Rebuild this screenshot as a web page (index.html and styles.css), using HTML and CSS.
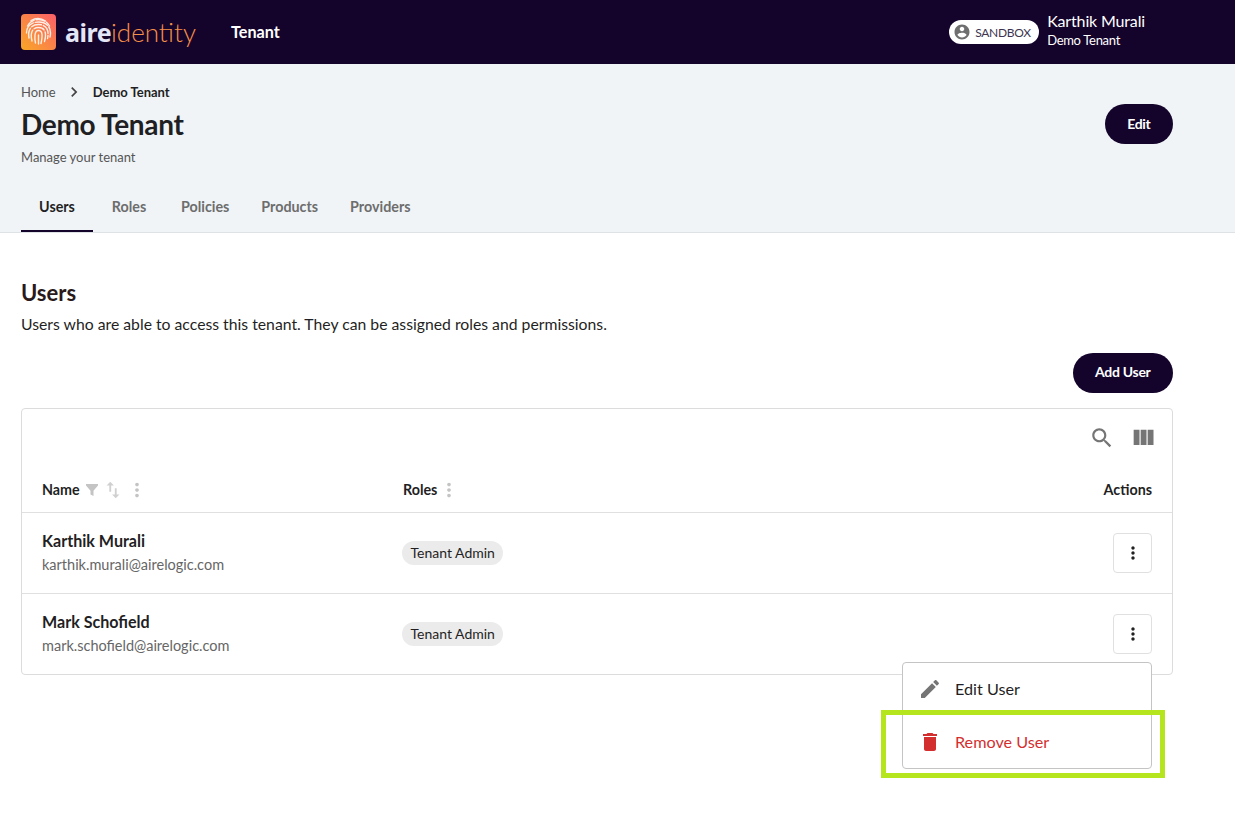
FILE: index.html
```html
<!DOCTYPE html>
<html lang="en">
<head>
    <meta charset="UTF-8">
    <title>Demo Tenant</title>
    <link rel="stylesheet" href="styles.css">
</head>
<body>
<header class="topbar">
    <div class="logo">
        <svg class="logo-mark" width="36" height="36" viewBox="0 0 36 36">
            <defs>
                <linearGradient id="mark" x1="0" y1="1" x2="1" y2="0">
                    <stop offset="0" stop-color="#f9a825"/>
                    <stop offset="1" stop-color="#fb5f6a"/>
                </linearGradient>
            </defs>
            <rect width="35" height="36" rx="4" fill="url(#mark)"/>
            <g fill="none" stroke="#fdeee6" stroke-width="1.4" stroke-linecap="round">
                <path d="M10 6.500c4.500-2.500 10-2.500 14.500 .5"/>
                <path d="M6.500 12c3-5 7-6.500 11-6.500s8 1.500 11 6.500" stroke-dasharray="9 2"/>
                <path d="M5.500 19c0-7 5-11 12-11s12 4 12 11c0 2-.2 3-.5 4" stroke-dasharray="13 2"/>
                <path d="M8 24c-1.500-8 2-13.500 9.500-13.500s11 5.500 9 14" stroke-dasharray="10 2"/>
                <path d="M11 27c-1.500-6-1-13.500 6.500-13.500s8 7 6 14" stroke-dasharray="11 2"/>
                <path d="M14.500 29c-1-4-1.500-12.500 3-12.500s4 6 2.500 13"/>
                <path d="M17.500 21v9"/>
            </g>
        </svg>
        <span class="logo-text"><b>aire</b><span class="logo-light">identity</span></span>
    </div>
    <span class="topbar-title">Tenant</span>
    <div class="topbar-right">
        <span class="env-pill">
            <svg width="18" height="18" viewBox="0 0 24 24"><path fill="#6f6f6f" d="M12 2C6.480 2 2 6.480 2 12s4.480 10 10 10 10-4.480 10-10S17.520 2 12 2zm0 3c1.660 0 3 1.340 3 3s-1.340 3-3 3-3-1.340-3-3 1.340-3 3-3zm0 14.200c-2.500 0-4.710-1.280-6-3.220.03-1.990 4-3.080 6-3.080 1.990 0 5.970 1.090 6 3.080-1.290 1.940-3.500 3.220-6 3.220z"/></svg>
            SANDBOX
        </span>
        <div class="user">
            <div class="user-name">Karthik Murali</div>
            <div class="user-tenant">Demo Tenant</div>
        </div>
    </div>
</header>

<section class="subhead">
    <div class="subhead-main">
        <div>
            <nav class="crumbs">
                <span>Home</span>
                <svg width="20" height="20" viewBox="0 0 24 24"><path fill="#444" d="M10 6 8.590 7.410 13.170 12l-4.580 4.590L10 18l6-6z"/></svg>
                <b>Demo Tenant</b>
            </nav>
            <h1>Demo Tenant</h1>
            <p class="subhead-note">Manage your tenant</p>
        </div>
        <button type="button" class="btn btn-edit">Edit</button>
    </div>
    <nav class="tabs">
        <a class="tab active">Users</a>
        <a class="tab">Roles</a>
        <a class="tab">Policies</a>
        <a class="tab">Products</a>
        <a class="tab">Providers</a>
    </nav>
</section>

<main class="content">
    <h2>Users</h2>
    <p class="lead">Users who are able to access this tenant. They can be assigned roles and permissions.</p>
    <div class="add-row">
        <button type="button" class="btn btn-add">Add User</button>
    </div>

    <div class="table-card">
        <div class="table-tools">
            <svg width="26" height="26" viewBox="0 0 24 24"><path fill="#757575" d="M15.500 14h-.79l-.28-.27C15.410 12.590 16 11.110 16 9.500 16 5.910 13.090 3 9.500 3S3 5.910 3 9.500 5.910 16 9.500 16c1.610 0 3.090-.59 4.230-1.570l.27.28v.79l5 4.990L20.490 19l-4.990-5zm-6 0C7.010 14 5 11.990 5 9.500S7.010 5 9.500 5 14 7.010 14 9.500 11.990 14 9.500 14z"/></svg>
            <svg width="28" height="28" viewBox="0 0 24 24"><path fill="#757575" d="M10 18h5V5h-5v13zm-6 0h5V5H4v13zM16 5v13h5V5h-5z"/></svg>
        </div>
        <div class="row row-head">
            <div class="col-name">
                <b>Name</b>
                <svg class="filter-icon" width="18" height="18" viewBox="0 0 24 24"><path fill="#c4c4c4" d="M4 4h16v2l-6 7v7l-4-2v-5L4 6z"/></svg>
                <svg class="sort-icon" width="22" height="22" viewBox="0 0 24 24"><path fill="#d0d0d0" d="M9 3 5 7h3v7h2V7h3L9 3zm7 14v-7h-2v7h-3l4 4 4-4h-3z"/></svg>
                <svg class="col-menu" width="22" height="22" viewBox="0 0 24 24"><path fill="#c4c4c4" d="M12 8c1.100 0 2-.9 2-2s-.9-2-2-2-2 .9-2 2 .9 2 2 2zm0 2c-1.100 0-2 .9-2 2s.9 2 2 2 2-.9 2-2-.9-2-2-2zm0 6c-1.100 0-2 .9-2 2s.9 2 2 2 2-.9 2-2-.9-2-2-2z"/></svg>
            </div>
            <div class="col-roles">
                <b>Roles</b>
                <svg class="roles-menu" width="22" height="22" viewBox="0 0 24 24"><path fill="#c4c4c4" d="M12 8c1.100 0 2-.9 2-2s-.9-2-2-2-2 .9-2 2 .9 2 2 2zm0 2c-1.100 0-2 .9-2 2s.9 2 2 2 2-.9 2-2-.9-2-2-2zm0 6c-1.100 0-2 .9-2 2s.9 2 2 2 2-.9 2-2-.9-2-2-2z"/></svg>
            </div>
            <div class="col-actions"><b>Actions</b></div>
        </div>
        <div class="row row-user">
            <div class="col-name">
                <div>
                    <div class="person">Karthik Murali</div>
                    <div class="email">karthik.murali@airelogic.com</div>
                </div>
            </div>
            <div class="col-roles"><span class="chip">Tenant Admin</span></div>
            <div class="col-actions">
                <button type="button" class="more">
                    <svg width="20" height="20" viewBox="0 0 24 24"><path fill="#222" d="M12 8c1.100 0 2-.9 2-2s-.9-2-2-2-2 .9-2 2 .9 2 2 2zm0 2c-1.100 0-2 .9-2 2s.9 2 2 2 2-.9 2-2-.9-2-2-2zm0 6c-1.100 0-2 .9-2 2s.9 2 2 2 2-.9 2-2-.9-2-2-2z"/></svg>
                </button>
            </div>
        </div>
        <div class="row row-user">
            <div class="col-name">
                <div>
                    <div class="person">Mark Schofield</div>
                    <div class="email">mark.schofield@airelogic.com</div>
                </div>
            </div>
            <div class="col-roles"><span class="chip">Tenant Admin</span></div>
            <div class="col-actions">
                <button type="button" class="more">
                    <svg width="20" height="20" viewBox="0 0 24 24"><path fill="#222" d="M12 8c1.100 0 2-.9 2-2s-.9-2-2-2-2 .9-2 2 .9 2 2 2zm0 2c-1.100 0-2 .9-2 2s.9 2 2 2 2-.9 2-2-.9-2-2-2zm0 6c-1.100 0-2 .9-2 2s.9 2 2 2 2-.9 2-2-.9-2-2-2z"/></svg>
                </button>
            </div>
        </div>
    </div>
</main>

<div class="menu">
    <div class="menu-item">
        <svg width="24" height="24" viewBox="0 0 24 24"><path fill="#757575" d="M3 17.250V21h3.750L17.810 9.940l-3.750-3.750L3 17.250zM20.710 7.040c.39-.39.39-1.020 0-1.410l-2.340-2.340c-.39-.39-1.020-.39-1.410 0l-1.830 1.830 3.750 3.750 1.830-1.830z"/></svg>
        Edit User
    </div>
    <div class="menu-item danger">
        <svg width="24" height="24" viewBox="0 0 24 24"><path fill="#d32f2f" d="M6 19c0 1.100.9 2 2 2h8c1.100 0 2-.9 2-2V7H6v12zM19 4h-3.500l-1-1h-5l-1 1H5v2h14V4z"/></svg>
        Remove User
    </div>
</div>
<div class="callout"></div>
</body>
</html>
```

FILE: styles.css
```css
* {
    margin: 0;
    border: 0;
    padding: 0;
    box-sizing: border-box;
}
html, body {
    height: 100%;
}
body {
    position: relative;
    font-family: Lato, "Liberation Sans", sans-serif;
    font-size: 16px;
    color: #1f1f24;
    background: #fff;
    overflow: hidden;
}
svg {
    display: block;
    flex-shrink: 0;
}
.topbar {
    height: 64px;
    background: #14042b;
    color: #fff;
    display: flex;
    align-items: center;
    padding: 0 90px 0 21px;
}
.logo {
    display: flex;
    align-items: center;
    gap: 8px;
    width: 210px;
}
.logo-text {
    font-family: "Noto Sans", Lato, sans-serif;
    font-size: 25px;
    letter-spacing: -0.5px;
    line-height: 36px;
    color: #e4e6f7;
}
.logo-text b {
    font-weight: 700;
}
.logo-light {
    font-family: Lato, sans-serif;
    font-weight: 300;
    font-size: 26px;
    letter-spacing: 0;
    color: #f79048;
}
.topbar-title {
    font-weight: 700;
    font-size: 16.2px;
    padding-bottom: 2px;
}
.topbar-right {
    margin-left: auto;
    display: flex;
    align-items: center;
    gap: 8px;
}
.env-pill {
    height: 24px;
    width: 90px;
    background: #fff;
    border-radius: 12px;
    color: #3d3550;
    font-size: 12px;
    letter-spacing: -0.3px;
    display: flex;
    align-items: center;
    gap: 4px;
    padding-left: 4px;
}
.user {
    padding-bottom: 4px;
}
.user-name {
    font-size: 16px;
    line-height: 20px;
    letter-spacing: -0.15px;
}
.user-tenant {
    font-size: 13px;
    line-height: 18px;
    letter-spacing: -0.3px;
}
.subhead {
    height: 169px;
    background: #f0f4f7;
    border-bottom: 1px solid #dfe2e5;
    padding: 0 62px 0 21px;
    display: flex;
    flex-direction: column;
}
.subhead-main {
    display: flex;
    justify-content: space-between;
    align-items: flex-start;
    padding-top: 18px;
    height: 124px;
}
.crumbs {
    display: flex;
    align-items: center;
    gap: 8px;
    font-size: 13px;
    line-height: 20px;
    color: #555;
}
.crumbs b {
    color: #1f1f24;
    margin-left: 1px;
}
h1 {
    font-size: 28px;
    font-weight: 700;
    line-height: 36px;
    letter-spacing: -0.3px;
    margin-top: 4px;
}
.subhead-note {
    font-size: 13px;
    line-height: 20px;
    color: #555;
    margin-top: 5px;
}
.btn {
    height: 40px;
    border-radius: 20px;
    background: #14042b;
    color: #fff;
    font: 700 14px Lato, sans-serif;
    letter-spacing: -0.3px;
    padding: 0 22.5px;
}
.btn-edit {
    margin-top: 22px;
    padding-bottom: 2px;
}
.btn-add {
    padding-bottom: 4px;
}
.tabs {
    display: flex;
    height: 44px;
}
.tab {
    font-size: 14.3px;
    font-weight: 700;
    color: #6d6d6d;
    line-height: 37px;
    min-width: 72px;
    text-align: center;
    padding: 0 16px;
}
.tab.active {
    color: #1f1f24;
    border-bottom: 2px solid #14042b;
}
.content {
    padding: 46px 62px 0 21px;
}
h2 {
    font-size: 22px;
    font-weight: 700;
    line-height: 28px;
    color: #2a1a1a;
}
.lead {
    font-size: 15.75px;
    line-height: 24px;
    margin-top: 5px;
}
.add-row {
    display: flex;
    justify-content: flex-end;
    margin-top: 17px;
}
.table-card {
    margin-top: 15px;
    border: 1px solid #dcdcdc;
    border-radius: 4px;
}
.table-tools {
    height: 60px;
    display: flex;
    justify-content: flex-end;
    align-items: center;
    gap: 14px;
    padding: 0 15px 3px 0;
}
.row {
    display: flex;
    align-items: center;
    padding: 0 20px;
}
.row-head {
    height: 43px;
    font-size: 14.3px;
    padding-bottom: 2px;
}
.row-user {
    height: 81px;
    border-top: 1px solid #e0e0e0;
}
.col-name {
    width: 361px;
    display: flex;
    align-items: center;
}
.col-roles {
    flex: 1;
    display: flex;
    align-items: center;
}
.col-actions {
    width: 100px;
    display: flex;
    justify-content: flex-end;
}
.filter-icon {
    margin-left: 3px;
}
.sort-icon {
    margin-left: 1px;
}
.col-menu {
    margin-left: 2px;
}
.roles-menu {
    margin-left: 1px;
}
.person {
    font-weight: 700;
    font-size: 16.1px;
    line-height: 22px;
    margin-top: -2px;
}
.email {
    font-size: 14.5px;
    line-height: 20px;
    color: #666;
    margin-top: 3px;
}
.chip {
    height: 24px;
    line-height: 24px;
    margin-left: -1px;
    padding: 0 8.5px;
    border-radius: 12px;
    background: #ebebeb;
    font-size: 14px;
}
.more {
    width: 39px;
    height: 40px;
    background: #fff;
    border: 1px solid #e0e0e0;
    border-radius: 4px;
    display: flex;
    align-items: center;
    justify-content: center;
}
.menu {
    position: absolute;
    left: 902px;
    top: 662px;
    width: 250px;
    height: 107px;
    background: #fff;
    border: 1px solid #c4c4c4;
    border-radius: 4px;
}
.menu-item {
    height: 53px;
    display: flex;
    align-items: center;
    gap: 13px;
    padding: 0 0 2px 15px;
    font-size: 16.2px;
}
.danger {
    color: #d32f2f;
}
.callout {
    position: absolute;
    left: 881px;
    top: 710px;
    width: 284px;
    height: 68px;
    border: 5px solid #b5e61d;
}
```
